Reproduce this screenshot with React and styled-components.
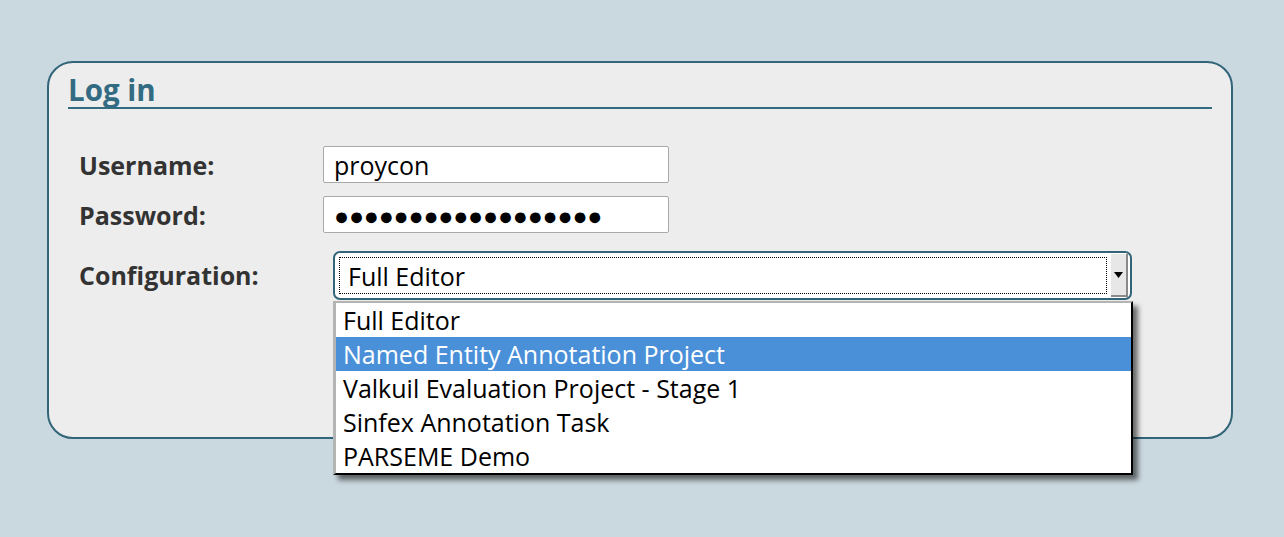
import React from "react";
import styled, { createGlobalStyle } from "styled-components";

const GlobalStyle = createGlobalStyle`
  html, body {
    margin: 0;
    padding: 0;
    background: #cad8df;
  }
  body {
    font-family: "Open Sans", "Noto Sans", sans-serif;
  }
`;

const Page = styled.div`
  width: 1284px;
  height: 537px;
  padding: 61px 51px 0 47px;
  box-sizing: border-box;
`;

const Panel = styled.div`
  position: relative;
  height: 378px;
  box-sizing: border-box;
  border: 2px solid #326579;
  border-radius: 26px;
  background: #ededed;
  padding: 9px 19px 0 19px;
`;

const Heading = styled.h2`
  margin: 0;
  font-family: "Open Sans", sans-serif;
  font-weight: 700;
  font-size: 29.5px;
  line-height: 35px;
  color: #336b82;
  border-bottom: 2px solid #336b82;
  padding-bottom: 0;
`;

const Form = styled.div`
  display: grid;
  grid-template-columns: 244px 1fr;
  padding: 37px 0 0 11px;
  row-gap: 13px;
  align-items: center;
`;

const Label = styled.label`
  font-family: "Open Sans", sans-serif;
  font-weight: 700;
  font-size: 25px;
  color: #333333;
  margin-top: ${(p) => p.$mt || 0}px;
`;

const Input = styled.div`
  width: 346px;
  height: 37px;
  box-sizing: border-box;
  border: 1px solid #a9a9a9;
  border-radius: 2px;
  background: #ffffff;
  padding: 0 10px;
  display: flex;
  align-items: center;
  font-family: "Open Sans", sans-serif;
  font-size: 25px;
  color: #000;
  letter-spacing: ${(p) => p.$spacing || 0}px;
  overflow: hidden;
  white-space: nowrap;
`;

const SelectWrap = styled.div`
  position: relative;
  margin: 5px 0 0 10px;
`;

const Select = styled.div`
  width: 799px;
  height: 49px;
  box-sizing: border-box;
  border: 2px solid #326579;
  border-radius: 7px;
  background: #ffffff;
  display: flex;
  align-items: stretch;
  padding: 4px 2px 4px 4px;
`;

const FocusRing = styled.div`
  flex: 1;
  border: 1px dotted #000;
  display: flex;
  align-items: center;
  padding-left: 8px;
  font-family: "Open Sans", sans-serif;
  font-size: 25px;
  color: #000;
`;

const ArrowButton = styled.div`
  width: 15px;
  margin-left: 4px;
  margin-top: -3px;
  margin-bottom: -3px;
  background: #e7e7e7;
  border-right: 2px solid #8a8a8a;
  border-bottom: 2px solid #8a8a8a;
  display: flex;
  align-items: center;
  justify-content: center;
`;

const Menu = styled.ul`
  position: absolute;
  top: 50px;
  left: 0;
  width: 800px;
  margin: 0;
  padding: 0;
  list-style: none;
  box-sizing: border-box;
  background: #fff;
  border-top: 2px solid #b4b4b4;
  border-left: 3px solid #b4b4b4;
  border-right: 2px solid #000;
  border-bottom: 2px solid #000;
  box-shadow: 5px 5px 5px rgba(0, 0, 0, 0.55);
  z-index: 2;
`;

const Option = styled.li`
  height: 34px;
  line-height: 34px;
  padding-left: 7px;
  font-family: "Open Sans", sans-serif;
  font-size: 25px;
  color: ${(p) => (p.$active ? "#ffffff" : "#000000")};
  background: ${(p) => (p.$active ? "#4a90d9" : "transparent")};
  white-space: nowrap;
`;

const options = [
  "Full Editor",
  "Named Entity Annotation Project",
  "Valkuil Evaluation Project - Stage 1",
  "Sinfex Annotation Task",
  "PARSEME Demo",
];

export default function App() {
  return (
    <>
      <GlobalStyle />
      <Page>
        <Panel>
          <Heading>Log in</Heading>
          <Form>
            <Label>Username:</Label>
            <Input>proycon</Input>
            <Label>Password:</Label>
            <Input $spacing={-0.2}>{"●".repeat(18)}</Input>
            <Label $mt={3}>Configuration:</Label>
            <SelectWrap>
              <Select>
                <FocusRing>Full Editor</FocusRing>
                <ArrowButton>
                  <svg width="9" height="6" viewBox="0 0 9 6">
                    <path d="M0 0 H9 L4.5 6 Z" fill="#000" />
                  </svg>
                </ArrowButton>
              </Select>
              <Menu>
                {options.map((o, i) => (
                  <Option key={o} $active={i === 1}>
                    {o}
                  </Option>
                ))}
              </Menu>
            </SelectWrap>
          </Form>
        </Panel>
      </Page>
    </>
  );
}
